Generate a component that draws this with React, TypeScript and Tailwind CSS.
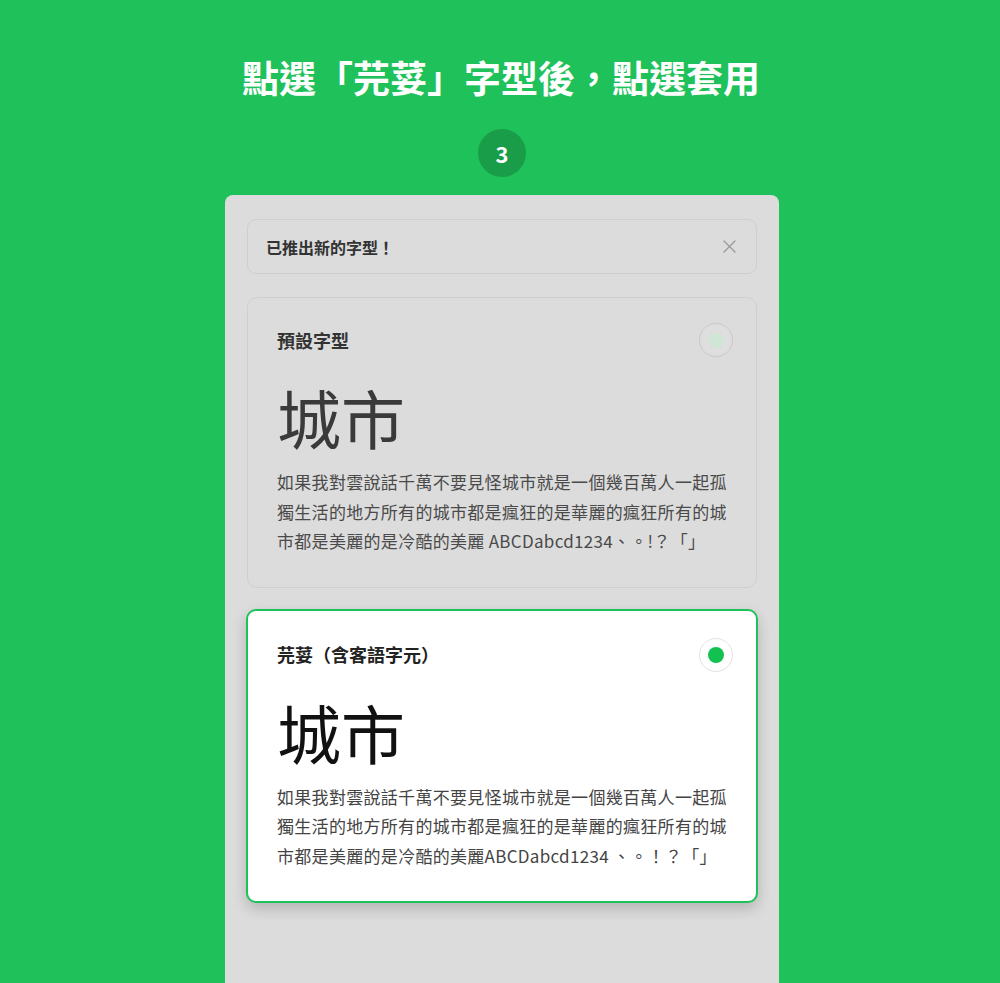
import React from 'react';

const SAMPLE =
  '如果我對雲說話千萬不要見怪城市就是一個幾百萬人一起孤獨生活的地方所有的城市都是瘋狂的是華麗的瘋狂所有的城市都是美麗的是冷酷的美麗';

interface FontCardProps {
  title: string;
  tail: string;
  selected?: boolean;
}

const FontCard: React.FC<FontCardProps> = ({ title, tail, selected }) => (
  <div
    className={
      selected
        ? 'rounded-[10px] border-2 border-[#1ec25a] bg-white pl-[29px] pr-[23px] pt-[27px] pb-[31px] shadow-[0_6px_14px_rgba(0,0,0,0.18)]'
        : 'rounded-[10px] border border-[#cfcfcf] bg-[#dcdcdc] pl-[29px] pr-[23px] pt-[25px] pb-[31px]'
    }
  >
    <div className="flex items-center justify-between h-[34px]">
      <span className={'text-[18px] font-bold ' + (selected ? 'text-[#222]' : 'text-[#333]')}>{title}</span>
      {selected ? (
        <span className="w-[34px] h-[34px] rounded-full border border-[#e3e3e3] bg-white flex items-center justify-center">
          <span className="w-[16px] h-[16px] rounded-full bg-[#12c150]" />
        </span>
      ) : (
        <span className="w-[34px] h-[34px] rounded-full border border-[#c9c9c9] bg-[#dedede] flex items-center justify-center">
          <span className="w-[15px] h-[15px] rounded-full bg-[#cfe6d6]" />
        </span>
      )}
    </div>
    <div className={'mt-[19px] text-[64px] leading-[80px] font-normal ' + (selected ? 'text-[#111]' : 'text-[#3a3a3a]')}>
      城市
    </div>
    <p
      className={
        'mt-[11px] mr-[6px] text-[17px] leading-[29.5px] tracking-[0.3px] ' +
        (selected ? 'text-[#444]' : 'text-[#4a4a4a]')
      }
    >
      {SAMPLE}
      {tail}
    </p>
  </div>
);

export default function App() {
  return (
    <div
      className="w-full h-[983px] overflow-hidden bg-[#1fc15a] flex flex-col items-center"
      style={{ fontFamily: '"Noto Sans CJK TC", "Noto Sans", sans-serif' }}
    >
      <h1 className="mt-[52px] ml-[2px] text-[37px] leading-[50px] font-bold text-white">
        點選「芫荽」字型後，點選套用
      </h1>
      <div className="mt-[27px] ml-[4px] w-[48px] h-[48px] rounded-full bg-[#1a9d48] flex items-center justify-center text-white text-[22px] font-bold">
        3
      </div>
      <div className="mt-[18px] ml-[4px] w-[554px] flex-1 bg-[#dcdcdc] rounded-t-[8px] px-[22px] pt-[24px] flex flex-col">
        <div className="h-[55px] rounded-[9px] border border-[#cfcfcf] flex items-center justify-between pl-[18px] pr-[20px]">
          <span className="text-[16px] font-bold text-[#333]">已推出新的字型！</span>
          <svg width="13" height="13" viewBox="0 0 13 13" className="text-[#9a9a9a]">
            <path d="M1 1 L12 12 M12 1 L1 12" stroke="currentColor" strokeWidth="1.4" strokeLinecap="round" />
          </svg>
        </div>
        <div className="mt-[23px]">
          <FontCard title="預設字型" tail=" ABCDabcd1234、。!？「」" />
        </div>
        <div className="mt-[21px] -mx-[1px]">
          <FontCard title="芫荽（含客語字元）" tail="ABCDabcd1234 、。！？「」" selected />
        </div>
      </div>
    </div>
  );
}
